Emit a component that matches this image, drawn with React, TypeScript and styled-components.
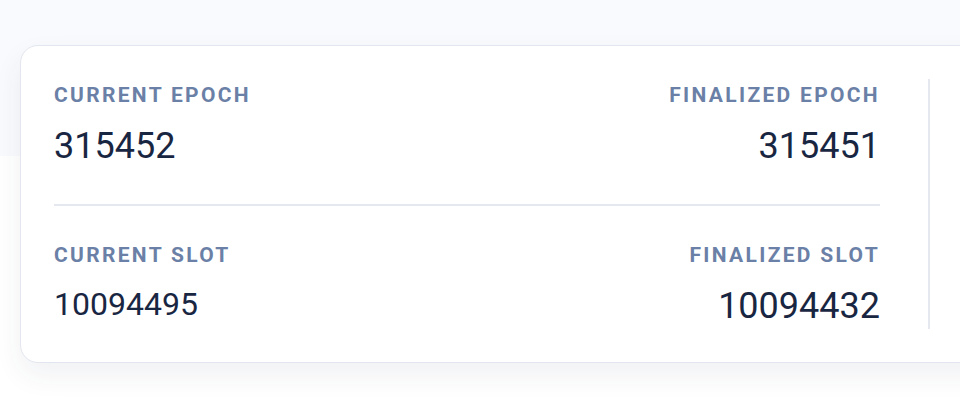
import styled, { createGlobalStyle } from "styled-components";

const GlobalStyle = createGlobalStyle`
  html, body {
    margin: 0;
    padding: 0;
    background: #ffffff;
    overflow: hidden;
  }
  body {
    font-family: Roboto, "Liberation Sans", Arial, sans-serif;
  }
`;

type Stat = {
  label: string;
  value: string;
  size?: number;
};

const rows: { left: Stat; right: Stat }[] = [
  {
    left: { label: "Current epoch", value: "315452" },
    right: { label: "Finalized epoch", value: "315451" },
  },
  {
    left: { label: "Current slot", value: "10094495", size: 32 },
    right: { label: "Finalized slot", value: "10094432" },
  },
];

const App = () => {
  return (
    <Page>
      <GlobalStyle />
      <Card>
        <Stats>
          {rows.map((row, i) => (
            <Row key={row.left.label} $first={i === 0} $last={i === rows.length - 1}>
              <StatBox>
                <Label>{row.left.label}</Label>
                <Value $size={row.left.size}>{row.left.value}</Value>
              </StatBox>
              <StatBox $right>
                <Label>{row.right.label}</Label>
                <Value $size={row.right.size}>{row.right.value}</Value>
              </StatBox>
            </Row>
          ))}
        </Stats>
        <Side />
      </Card>
    </Page>
  );
};

const Page = styled.div`
  width: 960px;
  height: 406px;
  box-sizing: border-box;
  padding: 45px 0 0 20px;
  background: linear-gradient(to bottom, #f9fafd 0, #f9fafd 156px, #ffffff 156px);
  overflow: hidden;
`;

const Card = styled.div`
  display: flex;
  width: 1400px;
  box-sizing: border-box;
  padding: 33px;
  background: #ffffff;
  border: 1px solid #e3e6ef;
  border-radius: 18px;
  box-shadow: 0 12px 28px rgba(40, 52, 90, 0.07);
`;

const Stats = styled.div`
  display: flex;
  flex-direction: column;
  width: 826px;
  flex-shrink: 0;
`;

const Row = styled.div<{ $first?: boolean; $last?: boolean }>`
  display: flex;
  justify-content: space-between;
  padding-top: ${(p) => (p.$first ? "0" : "33px")};
  padding-bottom: ${(p) => (p.$last ? "1px" : "36px")};
  border-bottom: ${(p) => (p.$last ? "none" : "2px solid #e6e8ef")};
`;

const StatBox = styled.div<{ $right?: boolean }>`
  display: flex;
  flex-direction: column;
  align-items: ${(p) => (p.$right ? "flex-end" : "flex-start")};
  text-align: ${(p) => (p.$right ? "right" : "left")};
`;

const Label = styled.div`
  font-size: 21px;
  line-height: 32px;
  font-weight: 700;
  letter-spacing: 0.11em;
  text-transform: uppercase;
  color: #6b80a6;
`;

const Value = styled.div<{ $size?: number }>`
  margin-top: 14px;
  font-size: ${(p) => p.$size ?? 36}px;
  line-height: 1.2;
  font-weight: 400;
  color: #192642;
`;

const Side = styled.div`
  margin-left: 48px;
  border-left: 2px solid #e6e8ef;
  flex: 1;
`;

export default App;
